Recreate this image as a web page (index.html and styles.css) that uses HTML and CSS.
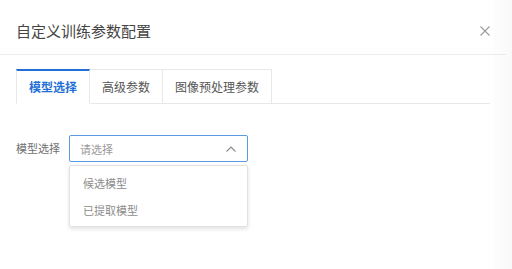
FILE: index.html
```html
<!DOCTYPE html>
<html lang="zh-CN">
<head>
  <meta charset="UTF-8">
  <title>自定义训练参数配置</title>
  <link rel="stylesheet" href="styles.css">
</head>
<body>

<div class="dialog">
  <div class="dialog-header">
    <span class="dialog-title">自定义训练参数配置</span>
    <button class="close-btn" aria-label="关闭">
      <svg width="10" height="10" viewBox="0 0 10 10">
        <path d="M0.5 0.5 L9.5 9.5 M9.5 0.5 L0.5 9.5" stroke="#9a9a9a" stroke-width="1.1" fill="none"/>
      </svg>
    </button>
  </div>

  <div class="dialog-body">
    <div class="tabs">
      <div class="tab active">模型选择</div>
      <div class="tab">高级参数</div>
      <div class="tab">图像预处理参数</div>
    </div>

    <div class="form-row">
      <label class="form-label">模型选择</label>
      <div class="select-wrap">
        <div class="select open">
          <span class="placeholder">请选择</span>
          <svg class="arrow" width="10" height="6" viewBox="0 0 10 6">
            <path d="M0.5 5.5 L5 1 L9.5 5.5" stroke="#8a8a8a" stroke-width="1.1" fill="none"/>
          </svg>
        </div>
        <ul class="dropdown">
          <li class="option">候选模型</li>
          <li class="option">已提取模型</li>
        </ul>
      </div>
    </div>
  </div>
</div>

<div class="edge-shade"></div>

</body>
</html>
```

FILE: styles.css
```css
* {
  box-sizing: border-box;
}

body {
  margin: 0;
  background: #ffffff;
  font-family: "Noto Sans CJK SC", "Noto Sans", sans-serif;
  color: #333;
  overflow: hidden;
}

.dialog {
  width: 506px;
  height: 269px;
  background: #ffffff;
}

.dialog-header {
  height: 55px;
  padding: 20px 16px 0 16px;
  border-bottom: 1px solid #ececec;
  display: flex;
  justify-content: space-between;
  align-items: flex-start;
}

.dialog-title {
  font-size: 15px;
  line-height: 22px;
  color: #444;
}

.close-btn {
  border: none;
  background: none;
  padding: 0;
  margin: 6px 0 0 0;
  width: 10px;
  height: 10px;
  cursor: pointer;
  display: flex;
}

.dialog-body {
  padding: 14px 16px 0 16px;
}

.tabs {
  display: flex;
  width: 474px;
  height: 35px;
  border-bottom: 1px solid #e8e8e8;
}

.tab {
  padding: 0 12px;
  font-size: 12px;
  line-height: 33px;
  color: #555;
  border-top: 1px solid #e8e8e8;
  border-right: 1px solid #e8e8e8;
  height: 35px;
}

.tab:first-child {
  border-left: 1px solid #e8e8e8;
}

.tab.active {
  border-top: 2px solid #1f6fd6;
  color: #1f6fd6;
  font-weight: bold;
  background: #ffffff;
  line-height: 32px;
  height: 35px;
  margin-bottom: -1px;
  border-bottom: 1px solid #ffffff;
}

.form-row {
  display: flex;
  align-items: flex-start;
  margin-top: 31px;
}

.form-label {
  width: 53px;
  font-size: 11px;
  line-height: 27px;
  color: #707070;
}

.select-wrap {
  position: relative;
  width: 179px;
}

.select {
  height: 27px;
  border: 1px solid #5a9ae0;
  border-radius: 2px;
  padding: 0 10px 0 10px;
  display: flex;
  align-items: center;
  justify-content: space-between;
}

.placeholder {
  font-size: 11px;
  color: #9a9a9a;
}

.arrow {
  margin-right: 1px;
}

.dropdown {
  position: absolute;
  top: 30px;
  left: 0;
  width: 179px;
  height: 62px;
  margin: 0;
  padding: 4px 0 0 0;
  list-style: none;
  background: #ffffff;
  border: 1px solid #e2e2e2;
  border-radius: 2px;
  box-shadow: 0 2px 4px rgba(0, 0, 0, 0.12);
}

.option {
  height: 27px;
  line-height: 27px;
  padding-left: 13px;
  font-size: 11px;
  color: #8c8c8c;
}

.edge-shade {
  position: absolute;
  top: 0;
  right: 0;
  width: 19px;
  height: 269px;
  background: linear-gradient(to right, rgba(0, 0, 0, 0.008), rgba(0, 0, 0, 0.025));
}
```
